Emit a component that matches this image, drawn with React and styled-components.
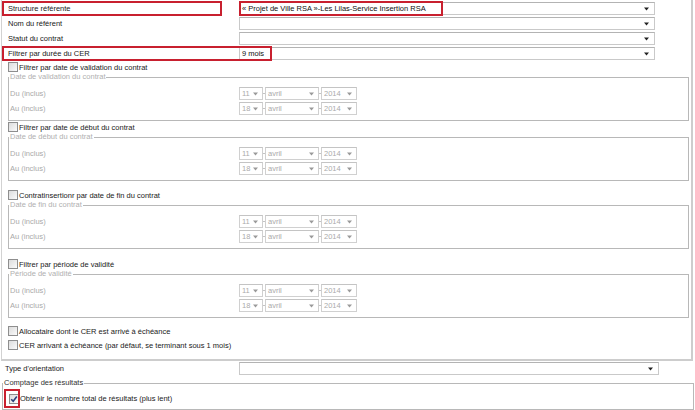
import React from 'react';
import styled, { createGlobalStyle } from 'styled-components';

const Global = createGlobalStyle`
  html, body { margin: 0; padding: 0; background: #fff; }
  body {
    font-family: "Liberation Sans", Arial, sans-serif;
    font-size: 7.5px;
    color: #222;
  }
  * { box-sizing: border-box; }
`;

const Page = styled.div`
  width: 695px;
  height: 410px;
  overflow: hidden;
`;

const OuterBox = styled.div`
  margin-left: 1px;
  width: 692px;
  border-left: 1px solid #d2d2d2;
  border-right: 2px solid #cdcdcd;
  border-bottom: 2px solid #cdcdcd;
  padding: 1px 0 7px 0;
`;

const Row = styled.div`
  position: relative;
  display: grid;
  grid-template-columns: ${p => p.$label}px auto;
  align-items: center;
  height: 15px;
`;

const RowLabel = styled.span`
  padding-left: ${p => p.$pad}px;
  line-height: 15px;
  white-space: nowrap;
  color: #1a1a1a;
`;

const Highlight = styled.span`
  position: absolute;
  top: 0;
  height: 15px;
  left: ${p => p.$left}px;
  width: ${p => p.$width}px;
  border: 2px solid #c8202f;
  pointer-events: none;
`;

const SelectBox = styled.div`
  display: flex;
  align-items: center;
  width: ${p => p.$w}px;
  height: 13px;
  padding-left: 2px;
  border: 1px solid ${p => (p.$disabled ? '#d0d0d0' : '#c9c9c9')};
  border-top-color: ${p => (p.$disabled ? '#c4c4c4' : '#b3b3b3')};
  background: #fff;
  color: ${p => (p.$disabled ? '#aaa' : '#111')};
  white-space: nowrap;
  overflow: hidden;
`;

const SelectText = styled.span`
  flex: 1;
  line-height: 11px;
`;

const ArrowIcon = styled.svg`
  flex: none;
  width: 5px;
  height: 4px;
  margin-right: ${p => p.$mr}px;
  fill: ${p => (p.$disabled ? '#9a9a9a' : '#222')};
`;

const Select = ({ w, text, disabled, mr = 5 }) => (
  <SelectBox $w={w} $disabled={disabled}>
    <SelectText>{text}</SelectText>
    <ArrowIcon viewBox="0 0 5 4" $disabled={disabled} $mr={mr}>
      <path d="M0 0.5h5L2.5 3.5z" />
    </ArrowIcon>
  </SelectBox>
);

const CheckRow = styled.label`
  display: flex;
  align-items: center;
  height: ${p => p.$h || 12}px;
  margin-top: ${p => p.$mt || 0}px;
  padding-left: 6px;
  color: #1a1a1a;
  white-space: nowrap;
`;

const CheckWrap = styled.span`
  position: relative;
  display: inline-flex;
  margin-right: 1px;
`;

const Box = styled.span`
  width: 10px;
  height: 10px;
  border: 1px solid #8e8e8e;
  background: linear-gradient(135deg, #dcdcdc 0%, #f4f4f4 80%, #fff 100%);
  display: inline-flex;
  align-items: center;
  justify-content: center;
`;

const CheckMark = styled.svg`
  width: 8px;
  height: 8px;
  stroke: #2a3f7a;
  stroke-width: 1.6;
  fill: none;
`;

const BoxHighlight = styled.span`
  position: absolute;
  left: -5px;
  top: -5px;
  right: -1px;
  bottom: -4px;
  border: 2px solid #c8202f;
`;

const Checkbox = ({ checked, marked }) => (
  <CheckWrap>
    <Box>
      {checked && (
        <CheckMark viewBox="0 0 8 8">
          <path d="M1.2 4.2 L3.2 6.2 L6.8 1.6" />
        </CheckMark>
      )}
    </Box>
    {marked && <BoxHighlight />}
  </CheckWrap>
);

const Fieldset = styled.fieldset`
  margin: 0 2px 0 6px;
  padding: 0 0 4px 0;
  border: 1px solid #b8b8b8;
  min-width: 0;
`;

const Legend = styled.legend`
  padding: 0 1px;
  margin-left: 0;
  line-height: 8px;
  font-size: 7.5px;
  color: ${p => (p.$disabled ? '#b0b0b0' : '#333')};
`;

const FieldBody = styled.div`
  padding-top: 5px;
`;

const DateRow = styled.div`
  display: grid;
  grid-template-columns: 230px auto;
  align-items: center;
  height: 15px;
`;

const DateLabel = styled.span`
  padding-left: 1px;
  color: #aaa;
`;

const DateSelects = styled.div`
  display: flex;
  align-items: center;
`;

const Sep = styled.span`
  width: 2px;
  height: 1px;
  background: #c4c4c4;
`;

const DateSelectGroup = ({ day }) => (
  <DateSelects>
    <Select w={24} text={day} disabled mr={4} />
    <Sep />
    <Select w={54} text="avril" disabled mr={4} />
    <Sep />
    <Select w={36} text="2014" disabled mr={4} />
  </DateSelects>
);

const DateFieldset = ({ legend }) => (
  <Fieldset>
    <Legend $disabled>{legend}</Legend>
    <FieldBody>
      <DateRow>
        <DateLabel>Du (inclus)</DateLabel>
        <DateSelectGroup day="11" />
      </DateRow>
      <DateRow>
        <DateLabel>Au (inclus)</DateLabel>
        <DateSelectGroup day="18" />
      </DateRow>
    </FieldBody>
  </Fieldset>
);

const CountFieldset = styled.fieldset`
  margin: 3px 1px 0 2px;
  padding: 0 0 4px 0;
  border: 1px solid #b8b8b8;
  min-width: 0;
`;

const CountBody = styled.div`
  padding-top: 5px;
`;

const CountRow = styled(CheckRow)`
  height: 13px;
`;

const dateSections = [
  { check: 'Filtrer par date de validation du contrat', legend: 'Date de validation du contrat', mt: 0 },
  { check: 'Filtrer par date de début du contrat', legend: 'Date de début du contrat', mt: 0 },
  { check: 'Contratinsertionr par date de fin du contrat', legend: 'Date de fin du contrat', mt: 8 },
  { check: 'Filtrer par période de validité', legend: 'Période de validité', mt: 9 },
];

export default function App() {
  return (
    <Page>
      <Global />
      <OuterBox>
        <Row $label={237}>
          <RowLabel $pad={6}>Structure référente</RowLabel>
          <Select w={416} text="« Projet de Ville RSA »-Les Lilas-Service Insertion RSA" />
          <Highlight $left={0} $width={220} />
          <Highlight $left={237} $width={204} />
        </Row>
        <Row $label={237}>
          <RowLabel $pad={6}>Nom du référent</RowLabel>
          <Select w={416} text="" />
        </Row>
        <Row $label={237}>
          <RowLabel $pad={6}>Statut du contrat</RowLabel>
          <Select w={416} text="" />
        </Row>
        <Row $label={237}>
          <RowLabel $pad={6}>Filtrer par durée du CER</RowLabel>
          <Select w={416} text="9 mois" />
          <Highlight $left={0} $width={270} />
        </Row>

        {dateSections.map(s => (
          <React.Fragment key={s.legend}>
            <CheckRow $mt={s.mt}>
              <Checkbox />
              {s.check}
            </CheckRow>
            <DateFieldset legend={s.legend} />
          </React.Fragment>
        ))}

        <CheckRow $mt={6} $h={14}>
          <Checkbox />
          Allocataire dont le CER est arrivé à échéance
        </CheckRow>
        <CheckRow $h={14}>
          <Checkbox />
          CER arrivant à échéance (par défaut, se terminant sous 1 mois)
        </CheckRow>
      </OuterBox>

      <Row $label={239}>
        <RowLabel $pad={5}>Type d'orientation</RowLabel>
        <Select w={420} text="" />
      </Row>

      <CountFieldset>
        <Legend>Comptage des résultats</Legend>
        <CountBody>
          <CountRow>
            <Checkbox checked marked />
            Obtenir le nombre total de résultats (plus lent)
          </CountRow>
        </CountBody>
      </CountFieldset>
    </Page>
  );
}
